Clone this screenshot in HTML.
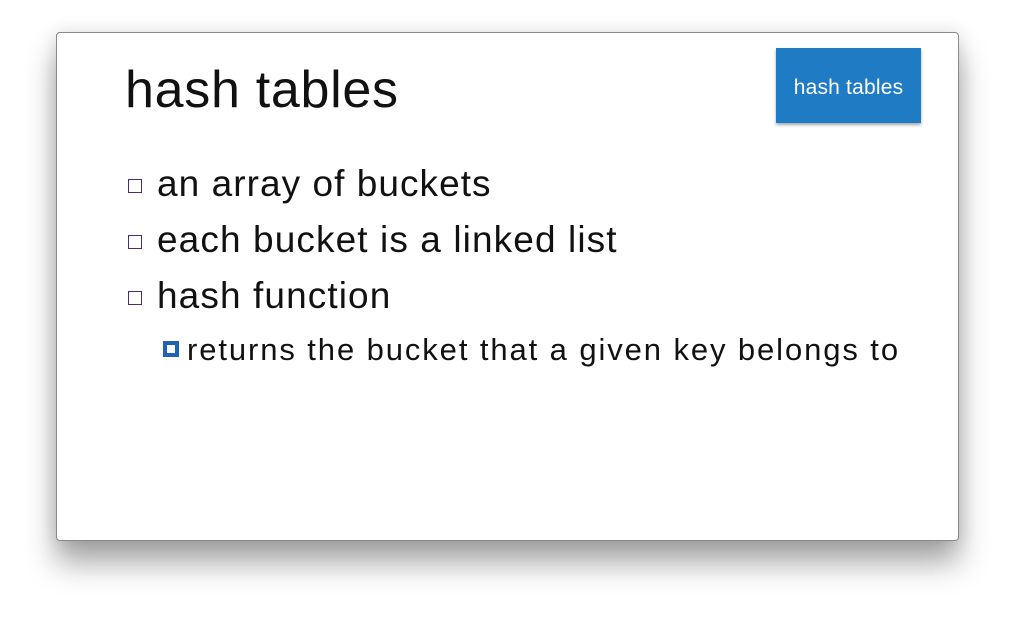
<!DOCTYPE html>
<html><head><style>
body{margin:0;width:1014px;height:620px;background:#fff;position:relative;overflow:hidden;font-family:"Liberation Sans",sans-serif;}
.slide{position:absolute;left:56px;top:32px;width:901px;height:507px;background:#fff;border:1px solid #8a8a8a;border-radius:4px;box-shadow:0 22px 30px rgba(0,0,0,0.35),0 0 18px rgba(0,0,0,0.12);}
.t{position:absolute;white-space:nowrap;color:#111;font-weight:300;}
.sq{position:absolute;width:12px;height:12px;border:1.5px solid #4b2a7a;}
.btn{position:absolute;left:776px;top:48px;width:145px;height:75px;background:#1f7bc4;color:#fff;font-size:21px;letter-spacing:0.2px;text-align:center;line-height:80px;box-shadow:0 2px 3px rgba(0,0,0,0.35);}
</style></head><body>
<div class="slide"></div>
<div class="t" style="left:125px;top:60px;font-size:52px;letter-spacing:0.7px">hash tables</div>
<div class="btn">hash tables</div>
<div class="sq" style="left:128px;top:179px"></div>
<div class="t" style="left:157px;top:163px;font-size:37px;letter-spacing:1.05px">an array of buckets</div>
<div class="sq" style="left:128px;top:235px"></div>
<div class="t" style="left:157px;top:219px;font-size:37px;letter-spacing:1.1px">each bucket is a linked list</div>
<div class="sq" style="left:128px;top:291px"></div>
<div class="t" style="left:157px;top:275px;font-size:37px;letter-spacing:1.1px">hash function</div>
<div style="position:absolute;left:163px;top:341px;width:8px;height:8px;border:4px solid #1f63b5;background:#fff"></div>
<div class="t" style="left:187px;top:332px;font-size:31px;letter-spacing:1.9px">returns the bucket that a given key belongs to</div>
</body></html>
